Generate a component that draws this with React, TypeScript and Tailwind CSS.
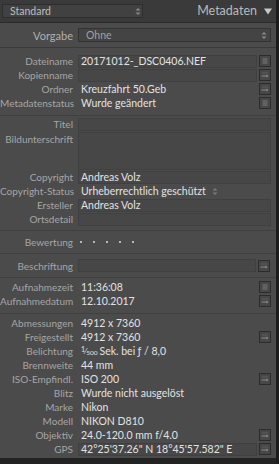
import React from "react";

const F = { fontFamily: "Lato, 'Open Sans', sans-serif" };

function ListIcon() {
  return (
    <div className="flex h-[12px] w-[12px] shrink-0 items-center justify-center border border-[#2c2c2c] bg-[#474747]">
      <svg width="10" height="10" viewBox="0 0 10 10">
        <path d="M2.5 3h5M2.5 5h5M2.5 7h5" stroke="#7c7c7c" strokeWidth="1" />
      </svg>
    </div>
  );
}

function ArrowIcon() {
  return (
    <div className="flex h-[12px] w-[12px] shrink-0 items-center justify-center border border-[#2c2c2c] bg-[#474747]">
      <svg width="10" height="10" viewBox="0 0 10 10">
        <path d="M2 3h6" stroke="#5e5e5e" strokeWidth="1" />
        <path d="M1.5 6h6" stroke="#8a8a8a" strokeWidth="1" />
        <path d="M6.5 4.5L8.5 6L6.5 7.5z" fill="#8a8a8a" />
      </svg>
    </div>
  );
}

function UpDown({ color = "#9a9a9a" }: { color?: string }) {
  return (
    <svg width="6" height="9" viewBox="0 0 6 9">
      <path d="M0.5 3.5L3 1L5.5 3.5z" fill={color} />
      <path d="M0.5 5.5L3 8L5.5 5.5z" fill={color} />
    </svg>
  );
}

function Label({ children }: { children?: React.ReactNode }) {
  return (
    <div className="w-[73px] shrink-0 whitespace-nowrap text-right text-[10px] leading-none text-[#a6a6a6]">
      {children}
    </div>
  );
}

function Row({
  label,
  children,
  icon,
  box,
}: {
  label: string;
  children?: React.ReactNode;
  icon?: "list" | "arrow";
  box?: boolean;
}) {
  return (
    <div className="flex h-[14px] items-center">
      <Label>{label}</Label>
      <div className="ml-[5px] mr-[5px] flex flex-1 items-center gap-[2px]">
        {box ? (
          <div className="flex h-[13px] flex-1 items-center border border-[#404040] bg-[#474747] pl-[2px] text-[10.5px] leading-none text-[#e2e2e2]">
            {children}
          </div>
        ) : (
          <div className="flex flex-1 items-center whitespace-nowrap pl-[3px] text-[10.5px] leading-none text-[#e2e2e2]">
            {children}
          </div>
        )}
        {icon === "list" && <ListIcon />}
        {icon === "arrow" && <ArrowIcon />}
      </div>
    </div>
  );
}

function Sep() {
  return <div className="h-[1px] bg-[#404040]" />;
}

export default function App() {
  return (
    <div className="flex h-[464px] w-[279px] bg-[#1c1c1c]" style={F}>
      <div className="flex w-[276px] flex-col bg-[#4b4b4b]">
        {/* header */}
        <div className="flex h-[22px] items-center bg-[#3a3a3a]">
          <div className="ml-[2px] flex h-[14px] w-[141px] items-center justify-between border border-[#2e2e2e] bg-[#414141] pl-[7px] pr-[1px]">
            <span className="text-[10.5px] leading-none text-[#bdbdbd]">Standard</span>
            <UpDown color="#8a8a8a" />
          </div>
          <div className="ml-auto mr-[4px] flex items-center gap-[7px]">
            <span className="text-[12.5px] leading-none text-[#b9b9b9]">Metadaten</span>
            <svg width="8" height="7" viewBox="0 0 8 7">
              <path d="M0 0.5h8L4 6.5z" fill="#c8c8c8" />
            </svg>
          </div>
        </div>
        <div className="h-[1px] bg-[#2a2a2a]" />
        {/* Vorgabe */}
        <div className="flex h-[24px] items-center">
          <div className="w-[73px] shrink-0 text-right text-[11px] leading-none text-[#b0b0b0]">Vorgabe</div>
          <div className="ml-[5px] mr-[5px] flex h-[14px] flex-1 items-center justify-between border border-[#333] bg-[#444] pl-[7px] pr-[3px]">
            <span className="text-[10.5px] leading-none text-[#a0a0a0]">Ohne</span>
            <UpDown color="#8a8a8a" />
          </div>
        </div>
        <div className="h-[1px] bg-[#3a3a3a]" />
        {/* section 1 */}
        <div className="flex h-[67px] flex-col pt-[6px]">
          <Row label="Dateiname" box icon="list">20171012-_DSC0406.NEF</Row>
          <Row label="Kopienname" box icon="arrow" />
          <Row label="Ordner" icon="arrow">Kreuzfahrt 50.Geb</Row>
          <Row label="Metadatenstatus" icon="list">Wurde geändert</Row>
        </div>
        <Sep />
        {/* section 2 */}
        <div className="flex h-[114px] flex-col pt-[1px]">
          <Row label="Titel" box />
          <div className="flex h-[39px] items-start">
            <div className="mt-[3px]">
              <Label>Bildunterschrift</Label>
            </div>
            <div className="ml-[5px] mr-[5px] mt-[1px] h-[38px] flex-1 border border-[#404040] bg-[#474747]" />
          </div>
          <Row label="Copyright" box>Andreas Volz</Row>
          <Row label="Copyright-Status">
            <span>Urheberrechtlich geschützt</span>
            <span className="ml-[6px]">
              <UpDown color="#7a7a7a" />
            </span>
          </Row>
          <Row label="Ersteller" box>Andreas Volz</Row>
          <Row label="Ortsdetail" box />
        </div>
        <Sep />
        {/* Bewertung */}
        <div className="flex h-[22px] items-center">
          <Label>Bewertung</Label>
          <div className="ml-[7px] flex items-center gap-[11px]">
            {[0, 1, 2, 3, 4].map((i) => (
              <div key={i} className="h-[2px] w-[2px] bg-[#b8b8b8]" />
            ))}
          </div>
        </div>
        <Sep />
        {/* Beschriftung */}
        <div className="flex h-[23px] items-center">
          <Label>Beschriftung</Label>
          <div className="ml-[5px] mr-[6px] flex flex-1 items-center gap-[2px]">
            <div className="h-[13px] flex-1 border border-[#404040] bg-[#474747]" />
            <ArrowIcon />
          </div>
        </div>
        <Sep />
        {/* Aufnahme */}
        <div className="flex h-[35px] flex-col pt-[2px]">
          <Row label="Aufnahmezeit" icon="list">11:36:08</Row>
          <Row label="Aufnahmedatum" icon="arrow">12.10.2017</Row>
        </div>
        <Sep />
        {/* EXIF */}
        <div className="flex flex-1 flex-col pt-[2px]">
          <Row label="Abmessungen">4912 x 7360</Row>
          <Row label="Freigestellt" icon="arrow">4912 x 7360</Row>
          <Row label="Belichtung">
            <span className="relative top-[-2px] text-[7px]">1</span>
            <span className="text-[8px]">⁄</span>
            <span className="relative top-[2px] text-[6.5px]">500</span>
            <span className="ml-[2px]">Sek. bei ƒ / 8,0</span>
          </Row>
          <Row label="Brennweite">44 mm</Row>
          <Row label="ISO-Empfindl." icon="arrow">ISO 200</Row>
          <Row label="Blitz">Wurde nicht ausgelöst</Row>
          <Row label="Marke">Nikon</Row>
          <Row label="Modell">NIKON D810</Row>
          <Row label="Objektiv" icon="arrow">24.0-120.0 mm f/4.0</Row>
          <Row label="GPS" box icon="arrow">42°25'37.26" N 18°45'57.582" E</Row>
        </div>
        <div className="h-[6px] bg-[#232323]" />
      </div>
    </div>
  );
}
